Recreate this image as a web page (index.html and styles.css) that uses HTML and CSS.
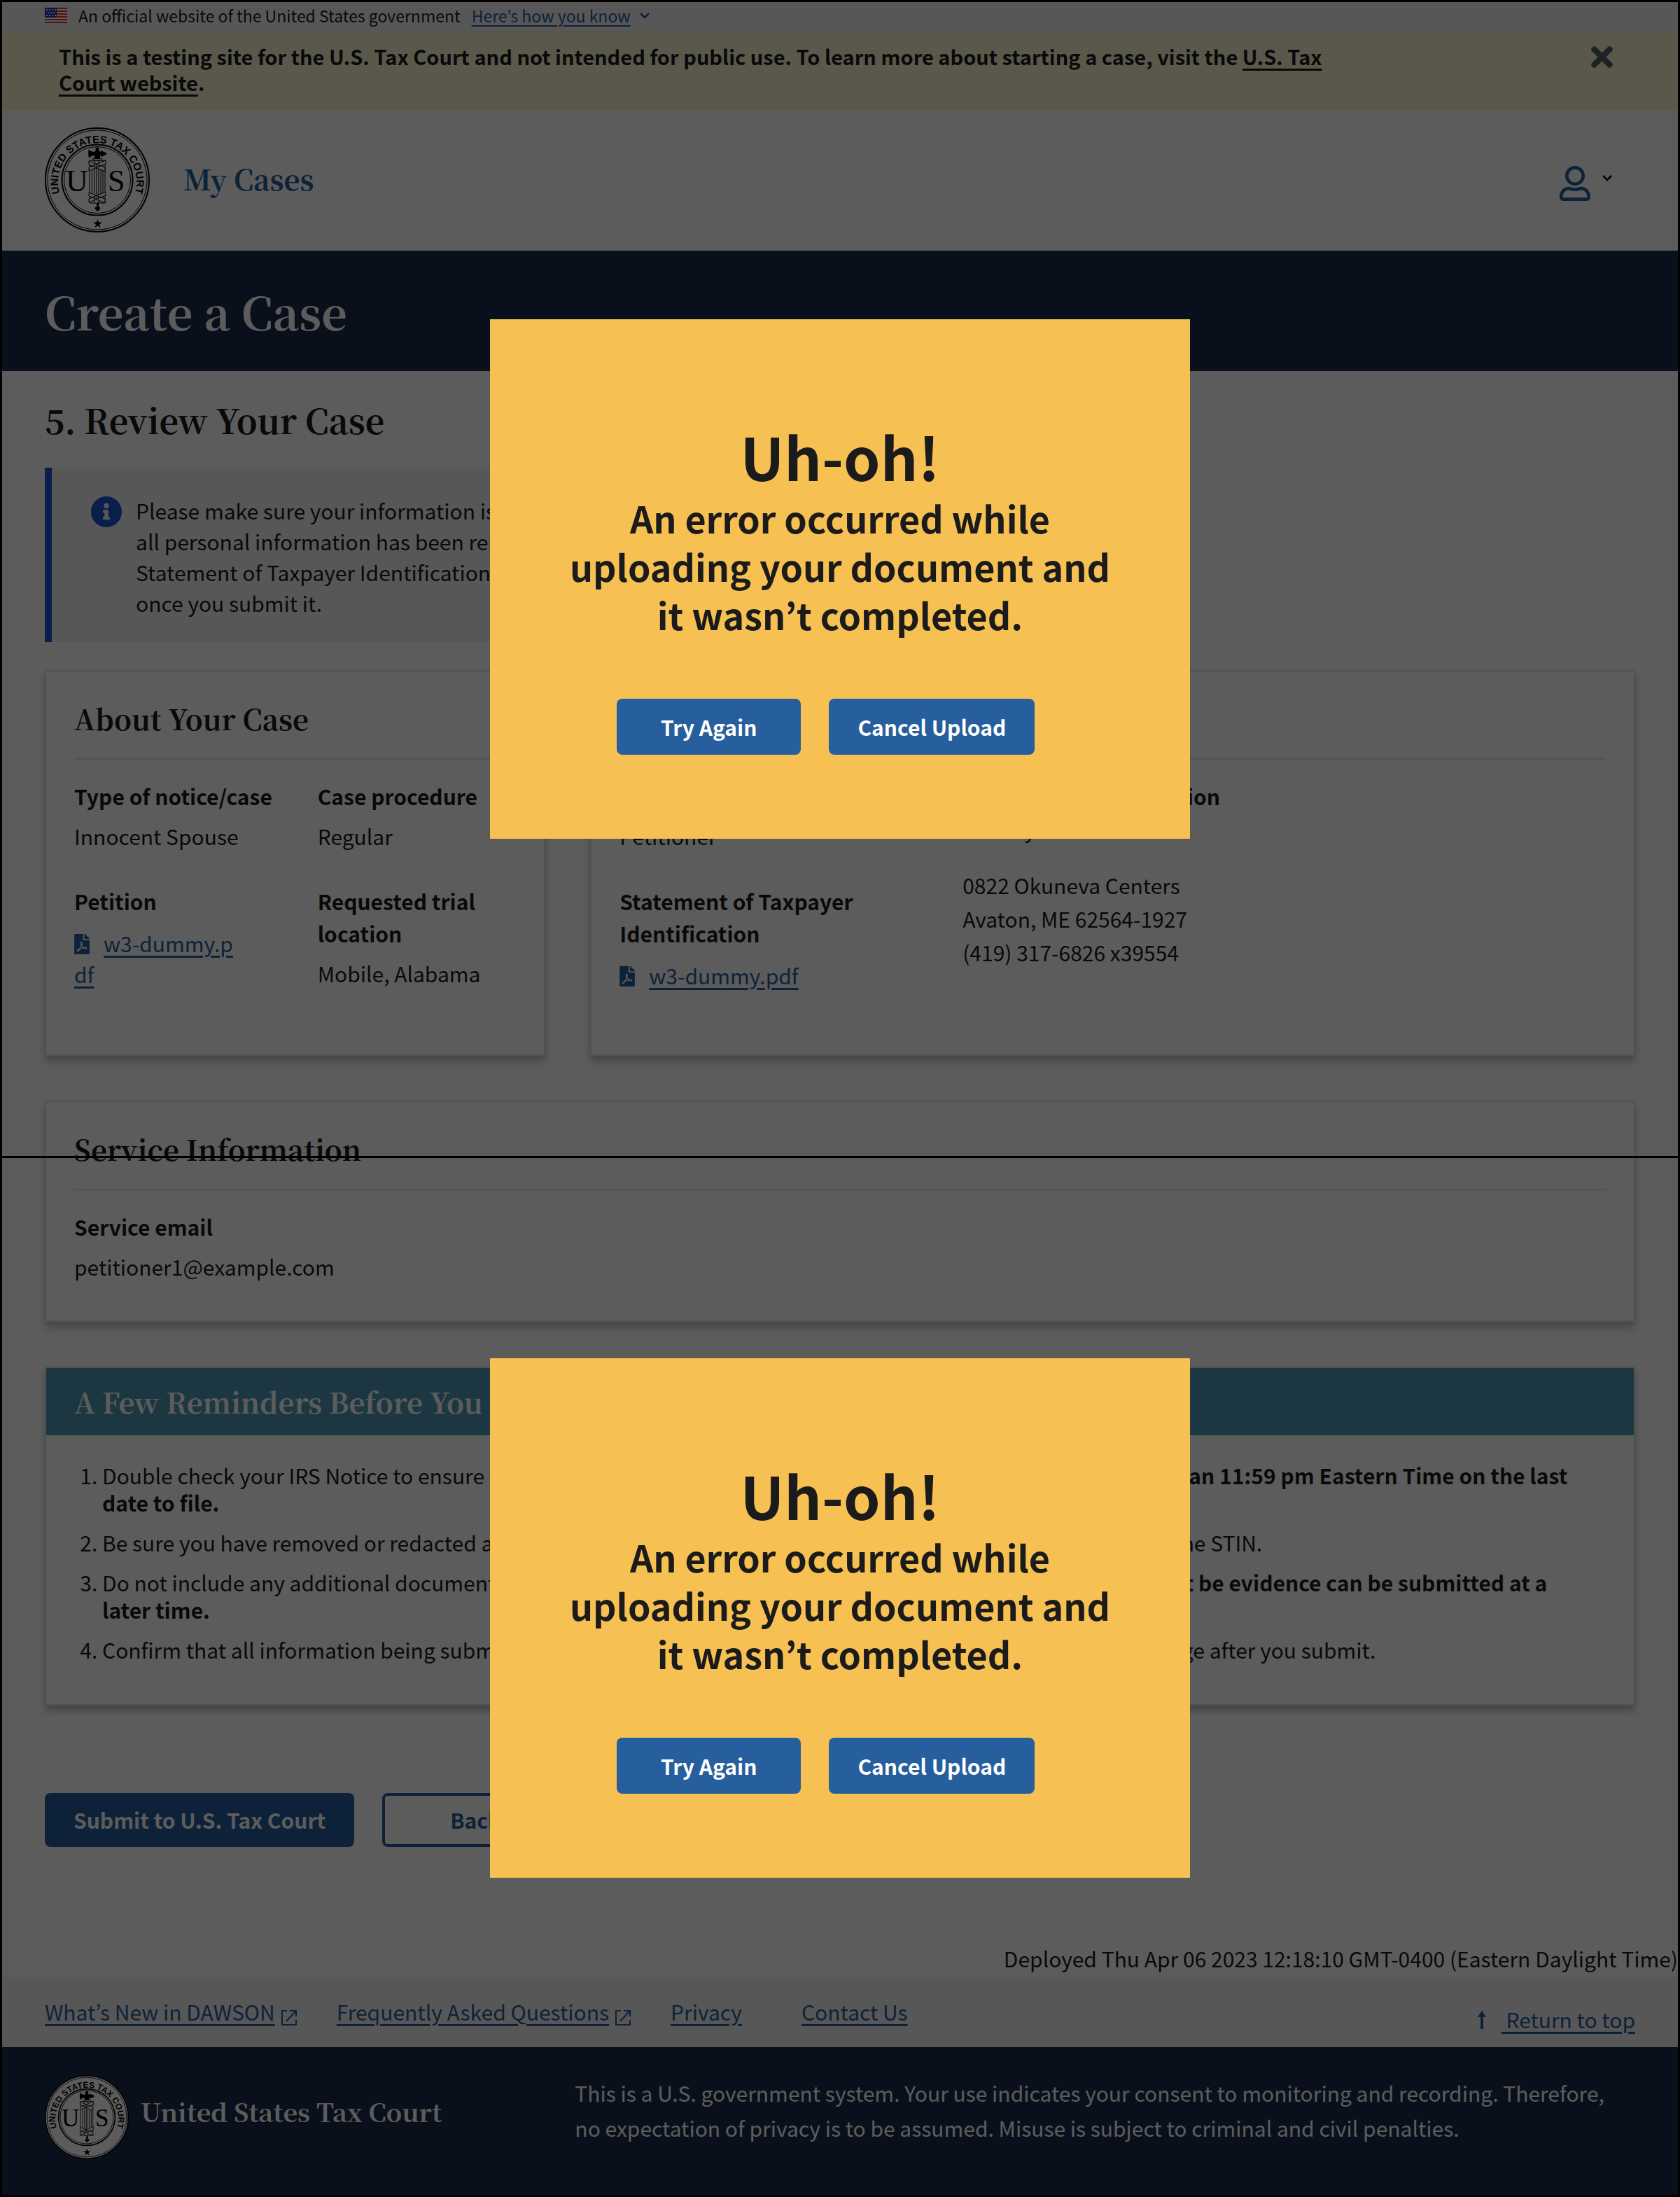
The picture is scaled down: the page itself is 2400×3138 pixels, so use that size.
FILE: index.html
```html
<!DOCTYPE html>
<html lang="en">
<head>
<meta charset="utf-8">
<title>Create a Case - U.S. Tax Court</title>
<meta name="viewport" content="width=device-width, initial-scale=1">
<link rel="stylesheet" href="styles.css">
</head>
<body>
<svg class="defs" aria-hidden="true">
  <symbol id="seal" viewBox="0 0 150 150">
    <circle cx="75" cy="75" r="74" fill="#fff" stroke="#000" stroke-width="2"/>
    <circle cx="75" cy="75" r="71" fill="none" stroke="#000" stroke-width="1"/>
    <circle cx="75" cy="75" r="50.500" fill="none" stroke="#000" stroke-width="2"/>
    <circle cx="75" cy="75" r="47.500" fill="none" stroke="#000" stroke-width="1"/>
    <path id="seal-arc" d="M23 99 A56 56 0 1 1 127 99" fill="none"/>
    <text class="seal-ring"><textPath href="#seal-arc" startOffset="50%">UNITED STATES TAX COURT</textPath></text>
    <text class="seal-letter" x="30" y="91">U</text>
    <text class="seal-letter" x="90" y="91">S</text>
    <path d="M64 47h22v61h-22z" fill="#fff"/>
    <path d="M64 47h22v61h-22zM67.500 52v50M71 47v61M74 52v50M77 47v61M80 52v50M83 47v61" fill="none" stroke="#000" stroke-width="1"/>
    <path d="M63 48l23 9v6l-23-10zM87 47l-24 10v5l24-10zM63 93l23 9v6l-23-10zM87 92l-24 10v5l24-10z" fill="#fff" stroke="#000" stroke-width="1"/>
    <path d="M69 44h12v3H69z" fill="#fff" stroke="#000" stroke-width="1"/>
    <path d="M63 32c3 2 5 3 8 3l2-3-1-2 3-2 3 2-1 2 2 3 3-2 2 2 4 1v3l-4 1-2 2-3-2v5h-8v-5c-3 0-5 1-8 4-1-4-1-10 0-14zM74 108h3v6h2v3l-3.500 3-3.500-3v-3h2z"/>
    <path d="M75.500 131l1.500 4.500h5l-4 3 1.500 4.700-4-2.900-4 2.900 1.500-4.700-4-3h5z"/>
  </symbol>
  <symbol id="pdf" viewBox="0 0 384 512"><path d="M181.900 256.100c-5-16-4.900-46.900-2-46.900 8.400 0 7.600 36.900 2 46.900zm-1.700 47.200c-7.700 20.200-17.300 43.300-28.400 62.700 18.300-7 39-17.200 62.900-21.900-12.700-9.600-24.900-23.400-34.500-40.800zM86.100 428.100c0 .8 13.200-5.400 34.900-40.200-6.700 6.300-29.100 24.500-34.900 40.200zM248 160h136v328c0 13.300-10.700 24-24 24H24c-13.300 0-24-10.700-24-24V24C0 10.700 10.700 0 24 0h200v136c0 13.200 10.800 24 24 24zm-8 171.800c-20-12.200-33.300-29-42.700-53.800 4.500-18.500 11.600-46.600 6.200-64.200-4.700-29.400-42.400-26.500-47.800-6.800-5 18.300-.4 44.100 8.100 77-11.600 27.600-28.700 64.600-40.800 85.800-.1 0-.1.1-.2.1-27.100 13.900-73.600 44.500-54.500 68 5.600 6.900 16 10 21.500 10 17.900 0 35.700-18 61.100-61.800 25.800-8.500 54.100-19.100 79-23.200 21.700 11.800 47.100 19.500 64 19.500 29.200 0 31.200-32 19.700-43.400-13.900-13.600-54.300-9.700-73.600-7.200zM377 105L279 7c-4.500-4.500-10.600-7-17-7h-6v128h128v-6.100c0-6.300-2.500-12.400-7-16.900zm-74.100 255.300c4.100-2.700-2.500-11.900-42.800-9 37.100 15.800 42.800 9 42.800 9z"/></symbol>
  <symbol id="external" viewBox="0 0 24 24"><path d="M9 2H2v20h20v-7M13 2h9v8M22 2L8 17" fill="none" stroke="currentColor" stroke-width="2"/></symbol>
  <symbol id="chevron" viewBox="0 0 16 10"><path d="M2 2l6 6 6-6" fill="none" stroke="currentColor" stroke-width="2.500"/></symbol>
</svg>

<div class="page">
  <section class="gov-banner" aria-label="Official government website">
    <svg class="flag" viewBox="0 0 32 22" aria-hidden="true">
      <rect width="32" height="22" fill="#fff"/>
      <path d="M0 1h32M0 5h32M0 9h32M0 13h32M0 17h32M0 21h32" stroke="#db3e1f" stroke-width="2"/>
      <rect width="17" height="14" fill="#1e33b1"/>
      <path d="M2 3h14M4 7h12M2 11h14" stroke="#fff" stroke-width="2" stroke-dasharray="2 2"/>
    </svg>
    <span>An official website of the United States government</span>
    <button class="gov-toggle" type="button"><span>Here’s how you know</span><svg class="chevron" aria-hidden="true"><use href="#chevron"/></svg></button>
  </section>

  <section class="test-banner" aria-label="Testing site notice">
    <p>This is a testing site for the U.S. Tax Court and not intended for public use. To learn more about starting a case, visit the <a href="#">U.S. Tax Court website</a>.</p>
    <button class="close" type="button" aria-label="Close"><svg viewBox="0 80 352 352" aria-hidden="true"><path d="M242.720 256l100.070-100.070c12.280-12.280 12.280-32.190 0-44.480l-22.240-22.240c-12.280-12.280-32.190-12.280-44.480 0L176 189.280 75.930 89.210c-12.280-12.280-32.190-12.280-44.480 0L9.210 111.450c-12.280 12.280-12.280 32.190 0 44.480L109.280 256 9.210 356.070c-12.280 12.280-12.280 32.190 0 44.480l22.240 22.240c12.280 12.280 32.200 12.280 44.480 0L176 322.720l100.070 100.070c12.280 12.280 32.200 12.280 44.480 0l22.240-22.240c12.280-12.280 12.280-32.190 0-44.480L242.720 256z"/></svg></button>
  </section>

  <header class="site-header">
    <svg class="seal" role="img" aria-label="United States Tax Court seal"><use href="#seal"/></svg>
    <a class="nav-link" href="#">My Cases</a>
    <button class="account" type="button" aria-label="Account menu">
      <svg class="user" viewBox="0 0 448 512" aria-hidden="true"><path d="M313.600 304c-28.700 0-42.500 16-89.600 16-47.100 0-60.800-16-89.600-16C60.200 304 0 364.200 0 438.400V464c0 26.500 21.500 48 48 48h352c26.500 0 48-21.500 48-48v-25.600c0-74.200-60.200-134.400-134.400-134.400zM400 464H48v-25.600c0-47.600 38.800-86.400 86.400-86.400 14.600 0 38.300 16 89.600 16 51.700 0 74.900-16 89.600-16 47.600 0 86.400 38.800 86.400 86.400V464zM224 288c79.500 0 144-64.500 144-144S303.500 0 224 0 80 64.500 80 144s64.500 144 144 144zm0-240c52.900 0 96 43.100 96 96s-43.100 96-96 96-96-43.100-96-96 43.100-96 96-96z"/></svg>
      <svg class="chevron" aria-hidden="true"><use href="#chevron"/></svg>
    </button>
  </header>

  <div class="title-bar"><h1>Create a Case</h1></div>

  <main>
    <h2 class="step">5. Review Your Case</h2>
    <div class="alert">
      <svg class="info" viewBox="8 8 496 496" aria-hidden="true"><path d="M256 8C119.043 8 8 119.083 8 256c0 136.997 111.043 248 248 248s248-111.003 248-248C504 119.083 392.957 8 256 8zm0 110c23.196 0 42 18.804 42 42s-18.804 42-42 42-42-18.804-42-42 18.804-42 42-42zm56 254c0 6.627-5.373 12-12 12h-88c-6.627 0-12-5.373-12-12v-24c0-6.627 5.373-12 12-12h12v-64h-12c-6.627 0-12-5.373-12-12v-24c0-6.627 5.373-12 12-12h64c6.627 0 12 5.373 12 12v100h12c6.627 0 12 5.373 12 12v24z"/></svg>
      <p>Please make sure your information is accurate and that<br>all personal information has been removed, except on the<br>Statement of Taxpayer Identification. You can’t edit your case<br>once you submit it.</p>
    </div>

    <div class="card-row">
      <section class="card">
        <h3>About Your Case</h3>
        <dl class="facts two">
          <div><dt>Type of notice/case</dt><dd>Innocent Spouse</dd></div>
          <div><dt>Case procedure</dt><dd>Regular</dd></div>
          <div><dt>Petition</dt><dd class="file narrow"><svg class="pdf" aria-hidden="true"><use href="#pdf"/></svg><a href="#">w3-dummy.pdf</a></dd></div>
          <div><dt>Requested trial location</dt><dd>Mobile, Alabama</dd></div>
        </dl>
      </section>
      <section class="card">
        <h3>About You</h3>
        <div class="you">
          <dl class="facts">
            <div><dt>Party type</dt><dd>Petitioner</dd></div>
            <div><dt>Statement of Taxpayer Identification</dt><dd class="file"><svg class="pdf" aria-hidden="true"><use href="#pdf"/></svg><a href="#">w3-dummy.pdf</a></dd></div>
          </dl>
          <div class="contact">
            <h4>Your contact information</h4>
            <p>Jeremy Welch</p>
            <address>0822 Okuneva Centers<br>Avaton, ME 62564-1927<br>(419) 317-6826 x39554</address>
          </div>
        </div>
      </section>
    </div>

    <section class="card service">
      <h3>Service Information</h3>
      <dl class="facts"><div><dt>Service email</dt><dd>petitioner1@example.com</dd></div></dl>
    </section>

    <section class="card reminders">
      <h3>A Few Reminders Before You Submit</h3>
      <ol>
        <li>Double check your IRS Notice to ensure the Petition is timely. <strong>The Court must receive your Petition no later than 11:59 pm Eastern Time on the last date to file.</strong></li>
        <li>Be sure you have removed or redacted all personal information within every document you upload, except for the STIN.</li>
        <li>Do not include any additional documents with your Petition, except for the IRS Notice. <strong>Documents which might be evidence can be submitted at a later time.</strong></li>
        <li>Confirm that all information being submitted appears as you want it to appear. You are not able to make a change after you submit.</li>
      </ol>
    </section>

    <div class="actions">
      <button class="btn" type="button">Submit to U.S. Tax Court</button>
      <button class="btn outline" type="button">Back</button>
    </div>
  </main>

  <p class="deployed">Deployed Thu Apr 06 2023 12:18:10 GMT-0400 (Eastern Daylight Time)</p>

  <nav class="footer-nav" aria-label="Footer">
    <a class="ext" href="#"><span>What’s New in DAWSON</span><svg aria-hidden="true"><use href="#external"/></svg></a>
    <a class="ext" href="#"><span>Frequently Asked Questions</span><svg aria-hidden="true"><use href="#external"/></svg></a>
    <a class="privacy" href="#">Privacy</a>
    <a href="#">Contact Us</a>
    <a class="to-top" href="#"><svg viewBox="0 0 12 26" aria-hidden="true"><path d="M6 0l6 9H8v17H4V9H0z"/></svg><span>&nbsp;Return to top</span></a>
  </nav>

  <footer class="site-footer">
    <div class="brand">
      <svg class="seal small" role="img" aria-label="United States Tax Court seal"><use href="#seal"/></svg>
      <span>United States Tax Court</span>
    </div>
    <p>This is a U.S. government system. Your use indicates your consent to monitoring and recording. Therefore, no expectation of privacy is to be assumed. Misuse is subject to criminal and civil penalties.</p>
  </footer>

  <div class="overlay">
    <div class="frame first">
      <div class="dialog" role="alertdialog" aria-labelledby="err-1">
        <h2 id="err-1">Uh-oh!</h2>
        <p>An error occurred while uploading your document and it wasn’t completed.</p>
        <div class="dialog-actions"><button class="btn wide" type="button">Try Again</button><button class="btn" type="button">Cancel Upload</button></div>
      </div>
    </div>
    <div class="frame second">
      <div class="dialog" role="alertdialog" aria-labelledby="err-2">
        <h2 id="err-2">Uh-oh!</h2>
        <p>An error occurred while uploading your document and it wasn’t completed.</p>
        <div class="dialog-actions"><button class="btn wide" type="button">Try Again</button><button class="btn" type="button">Cancel Upload</button></div>
      </div>
    </div>
  </div>
</div>
</body>
</html>
```
FILE: styles.css
```css
:root {
  --sans: "Source Sans Pro", "Noto Sans CJK KR", "Noto Sans", sans-serif;
  --serif: "Source Serif Pro", "Noto Serif CJK KR", "Noto Serif CJK SC", "Liberation Serif", serif;
  --ink: #1b1b1b;
  --blue: #265e9e;
  --navy: #1b2d4d;
  --line: #dfe1e2;
}

* { box-sizing: border-box; }

body {
  margin: 0;
  background: #fff;
  color: var(--ink);
  font-family: var(--sans);
  font-size: 30px;
  line-height: 44px;
}

h1, h2, h3, h4, p, dl, dd, ol { margin: 0; padding: 0; }
h1, h2, h3 { font-family: var(--serif); font-weight: 700; }
a { color: var(--blue); text-decoration-thickness: 3px; text-underline-offset: 5px; }
button { font: inherit; color: inherit; cursor: pointer; }
svg { display: block; flex: none; fill: currentColor; }
.defs { position: absolute; width: 0; height: 0; }

.page { position: relative; overflow: hidden; }

.gov-banner {
  display: flex;
  align-items: center;
  gap: 16px;
  padding: 8px 64px;
  background: #f0f0f0;
  font-size: 23px;
  line-height: 28px;
}
.flag { width: 32px; height: 22px; }
.gov-toggle {
  display: flex;
  align-items: center;
  gap: 12px;
  padding: 0;
  border: 0;
  background: none;
  color: var(--blue);
}
.gov-toggle span { text-decoration: underline; text-decoration-thickness: 2px; text-underline-offset: 4px; }
.chevron { width: 16px; height: 10px; }

.test-banner {
  display: flex;
  justify-content: space-between;
  align-items: flex-start;
  padding: 18px 96px 22px 84px;
  background: #f5f4cf;
  font-size: 29px;
  font-weight: 700;
  line-height: 37px;
}
.test-banner p { max-width: 1820px; }
.test-banner a { color: inherit; }
.close { padding: 4px 0; border: 0; background: none; color: #565c65; }
.close svg { width: 31px; height: 31px; }

.site-header {
  display: flex;
  align-items: center;
  padding: 24px 96px 26px 64px;
}
.seal { width: 150px; height: 150px; color: #000; }
.seal.small { width: 120px; height: 120px; }
.seal-ring { font: 700 15px "Liberation Sans", sans-serif; text-anchor: middle; }
.seal-letter { font: 44px "Liberation Serif", serif; }
.nav-link {
  margin: 0 0 4px 48px;
  font: 700 40px/56px var(--serif);
  text-decoration: none;
}
.account {
  display: flex;
  align-items: flex-start;
  gap: 16px;
  margin-left: auto;
  padding: 10px 0 0;
  border: 0;
  background: none;
  color: #000;
}
.user { width: 44px; height: 50px; fill: var(--blue); }
.account .chevron { margin-top: 12px; }

.title-bar { padding: 46px 64px; background: var(--navy); color: #fff; }
.title-bar h1 { font-size: 64px; line-height: 80px; }

main { padding: 38px 64px 0; }
.step { margin-bottom: 36px; font-size: 48px; line-height: 64px; }

.alert {
  display: flex;
  gap: 20px;
  width: 1135px;
  margin-bottom: 40px;
  padding: 39px 32px 34px 56px;
  border-left: 10px solid #1c54d2;
  background: #f0f0f0;
}
.info { width: 44px; height: 44px; margin-top: 2px; color: #1c54d2; }

.card-row { display: grid; grid-template-columns: 715fr 1492fr; gap: 64px; }
.card {
  margin-bottom: 64px;
  padding: 39px 40px 55px;
  border: 2px solid var(--line);
  background: #fff;
  box-shadow: 0 8px 10px rgba(0, 0, 0, 0.25);
}
.card-row .card { padding-bottom: 91px; }
.card h3 {
  padding-bottom: 29px;
  border-bottom: 2px solid var(--line);
  font-size: 40px;
  line-height: 56px;
}
.facts { display: grid; gap: 48px 64px; margin-top: 29px; }
.facts.two { grid-template-columns: 1fr 1fr; }
dt, h4 { font-size: 30px; font-weight: 700; line-height: 46px; }
dd { margin-top: 12px; }
dd.file { margin-top: 15px; word-break: break-all; }
dd.narrow { max-width: 240px; }
.pdf { display: inline-block; width: 22px; height: 29px; margin-right: 20px; vertical-align: -3px; color: var(--blue); }
.you { display: grid; grid-template-columns: repeat(3, 1fr); gap: 61px; }
.contact { margin-top: 29px; line-height: 48px; }
.contact h4 { margin: 0; }
.contact address { margin-top: 32px; font-style: normal; }

.card.reminders { margin-bottom: 125px; padding: 0 0 58px; }
.card.reminders h3 { padding: 20px 40px; border: 0; background: #4f9ab8; color: #fff; }
.reminders ol { margin: 38px 48px 0 40px; padding-left: 40px; line-height: 39px; }
.reminders li + li { margin-top: 18px; }

.btn {
  padding: 16px 41px 17px;
  border: 0;
  border-radius: 8px;
  background: var(--blue);
  color: #fff;
  font-weight: 700;
  line-height: 44px;
}
.btn.outline { padding: 12px 93px 13px; border: 4px solid var(--blue); background: #fff; color: var(--blue); }
.btn.wide { padding-right: 63px; padding-left: 63px; }
.actions { display: flex; gap: 40px; }

.deployed { margin: 137px 3px 5px; text-align: right; }

.footer-nav {
  display: flex;
  align-items: flex-start;
  gap: 56px;
  padding: 27px 64px 18px;
  background: #f0f0f0;
}
.ext { display: flex; gap: 8px; text-decoration: none; }
.ext span, .to-top span { text-decoration: underline; text-decoration-thickness: 3px; text-underline-offset: 5px; }
.ext svg { width: 24px; height: 24px; margin-top: 19px; }
.privacy { margin-right: 29px; }
.to-top { display: flex; gap: 22px; margin: 11px 0 0 auto; text-decoration: none; }
.to-top svg { width: 12px; height: 26px; margin-top: 10px; }

.site-footer {
  display: grid;
  grid-template-columns: 1fr 2fr;
  padding: 40px 64px 54px;
  background: var(--navy);
  color: #fff;
  line-height: 50px;
}
.site-footer p { padding-right: 32px; }
.brand { display: flex; gap: 17px; font: 700 36px/104px var(--serif); }

.overlay { position: absolute; inset: 0; border: 3px solid #000; background: rgba(0, 0, 0, 0.64); }
.frame {
  position: absolute;
  left: 0;
  right: 0;
  display: grid;
  place-items: center;
  height: 1648px;
}
.first { top: 0; box-shadow: 0 3px 0 #000; }
.second { bottom: 0; }
.dialog {
  width: 1000px;
  padding: 141px 104px 120px;
  background: #f6c152;
  text-align: center;
}
.dialog h2 { font: 700 84px/108px var(--sans); }
.dialog p { font-size: 52px; font-weight: 700; line-height: 69px; }
.dialog-actions { display: flex; gap: 40px; margin: 86px 0 0 77px; }
.dialog .btn { padding-top: 18px; padding-bottom: 18px; }
```
